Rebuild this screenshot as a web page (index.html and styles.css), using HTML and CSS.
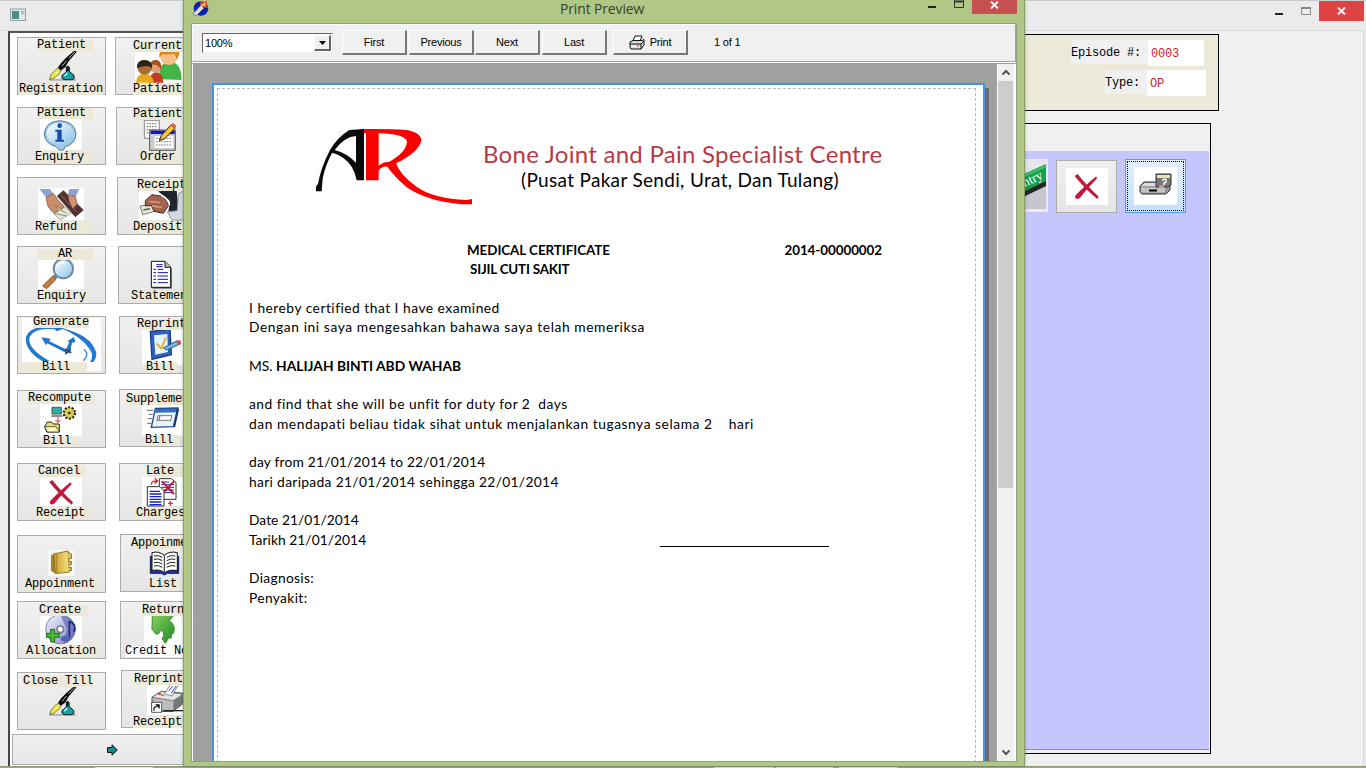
FILE: index.html
```html
<!DOCTYPE html>
<html lang="en">
<head>
<meta charset="utf-8">
<title>Print Preview</title>
<link rel="stylesheet" href="styles.css">
</head>
<body>
<div class="desktop">
  <svg class="defs" width="0" height="0">
    <defs>
      <linearGradient id="lens" x1="0" y1="0" x2="1" y2="1"><stop offset="0" stop-color="#fff"/><stop offset="1" stop-color="#8cc4e8"/></linearGradient>
      <linearGradient id="leaf" x1="0" y1="0" x2="1" y2="1"><stop offset="0" stop-color="#8ad060"/><stop offset="1" stop-color="#1d8a22"/></linearGradient>
      <linearGradient id="disc" x1="0" y1="0" x2="1" y2="1"><stop offset="0" stop-color="#f4f4ff"/><stop offset="1" stop-color="#7f86c8"/></linearGradient>
      <linearGradient id="gold" x1="0" y1="0" x2="1" y2="0"><stop offset="0" stop-color="#c99a20"/><stop offset="1" stop-color="#f8e588"/></linearGradient>
      <symbol id="pen" viewBox="0 0 84 92">
        <path d="M2 90H82" stroke="#777" stroke-width="3"/>
        <path d="M84 0H79L54 22L38 38L28 52L36 62L50 52L60 34L84 6Z" fill="#0c0c0c"/>
        <path d="M79 6L60 25M54 32L40 48" stroke="#ddd" stroke-width="2.500"/>
        <path d="M27 54L14 66L7 74L2 89L16 84L32 71L37 62Z" fill="#f2e835" stroke="#444" stroke-width="2"/>
        <path d="M20 66L28 70" stroke="#fff" stroke-width="3"/>
        <path d="M53 60V52Q58 46 62 52V64L76 76V86L70 89H46L40 84V76L53 66Z" fill="#16a0a8" stroke="#111" stroke-width="3"/>
        <path d="M47 78L56 69" stroke="#9ff" stroke-width="5"/>
        <path d="M57 48V64" stroke="#111" stroke-width="6"/>
      </symbol>
      <symbol id="cross" viewBox="0 0 80 80">
        <path d="M6 8L14 3Q36 32 76 70L72 77Q36 48 4 8Z" fill="#b8203a"/>
        <path d="M68 10L72 15Q44 44 18 76L8 76L6 68Q30 42 68 10Z" fill="#c8143c"/>
      </symbol>
    </defs>
  </svg>

  <section class="main-window">
    <header class="main-title">
      <svg class="app-icon" width="16" height="14" viewBox="0 0 16 14"><rect x=".5" y="1" width="15" height="11.5" fill="#dfe8e8" stroke="#999ea0"/><rect x="2" y="3" width="7" height="8" fill="#4d8c86"/><rect x="11" y="3" width="3" height="3" fill="#a9bfc0"/></svg>
      <div class="controls">
        <svg width="54" height="22" viewBox="0 0 54 22"><path d="M10 13H18" stroke="#222" stroke-width="2"/><path d="M36.500 6.500H45.500V13.500H36.500Z" fill="none" stroke="#8a8a8a"/><path d="M36 7H46" stroke="#8a8a8a" stroke-width="2"/></svg>
        <div class="close"><svg width="9" height="8" viewBox="0 0 9 8"><path d="M1 .5L8 7.500M8 .5L1 7.500" stroke="#fff" stroke-width="1.800"/></svg></div>
      </div>
    </header>
    <div class="main-body">
      <nav class="sidebar">
        <div class="row r1">
          <div class="tile reg"><svg viewBox="51 111 267 174"><use href="#pen" x="146" y="150" width="84" height="92"/></svg><span class="cap a">Patient</span><span class="cap b">Registration</span></div>
          <div class="tile cur"><svg viewBox="345 111 267 174"><rect x="405" y="150" width="150" height="99" fill="#fff"/><path d="M480 238Q470 190 510 186Q546 188 544 240Z" fill="#45b548"/><circle cx="507" cy="168" r="27" fill="#f4c089"/><path d="M478 166Q478 148 500 150L538 148Q540 170 528 178Q532 156 500 164Q488 158 478 174Z" fill="#d98a1c"/><path d="M448 248Q448 218 470 216Q490 220 490 248Z" fill="#c33d22"/><circle cx="467" cy="200" r="18" fill="#dba070"/><path d="M450 196Q452 178 470 180Q486 184 484 210Q470 188 450 196Z" fill="#a9501c"/><path d="M408 248Q410 222 434 220Q458 224 462 248Z" fill="#e6ab18"/><circle cx="434" cy="202" r="22" fill="#a96a35"/><path d="M411 204Q410 180 434 180Q458 182 456 204Q446 192 411 204Z" fill="#282218"/></svg><span class="cap a">Current</span><span class="cap b">Patient</span></div>
        </div>
        <div class="row r2">
          <div class="tile enq"><svg viewBox="51 321 267 174"><rect x="120" y="350" width="125" height="99" fill="#fff"/><path d="M168 440Q134 430 133 402Q136 364 180 362Q226 366 228 402Q226 432 196 440L190 450H178Z" fill="#9fcbe8" stroke="#59779b" stroke-width="3"/><ellipse cx="180" cy="400" rx="40" ry="32" fill="url(#lens)"/><circle cx="179" cy="377" r="7" fill="#174aa8"/><path d="M166 389H185V419H192V425H166V419H172V395H166Z" fill="#174aa8"/></svg><span class="cap a">Patient</span><span class="cap b">Enquiry</span></div>
          <div class="tile ord"><svg viewBox="348 321 267 174"><path d="M433 361H478V415H433Z" fill="#f8f8f8" stroke="#888" stroke-width="3"/><path d="M440 371H470M440 380H470M440 389H470M440 398H470" stroke="#777" stroke-width="3" stroke-dasharray="5 3"/><path d="M449 390H526V451H449Z" fill="#ccc" stroke="#555" stroke-width="3"/><path d="M452 397H524" stroke="#1010d8" stroke-width="10"/><path d="M464 408H520V444H464Z" fill="#fff"/><path d="M468 415H516M468 425H516M468 435H516" stroke="#777" stroke-width="3" stroke-dasharray="5 3"/><path d="M478 422L484 406L514 374L526 384L494 416Z" fill="#f4c52b" stroke="#222" stroke-width="3"/><path d="M512 376L519 369L529 378L523 386Z" fill="#e05848"/></svg><span class="cap a">Patient</span><span class="cap b">Order</span></div>
        </div>
        <div class="row r3">
          <div class="tile ref"><svg viewBox="51 531 267 174"><rect x="114" y="565" width="138" height="95" fill="#fff"/><path d="M118 567H150L160 582L140 594Z" fill="#8ca4d0"/><path d="M238 567H208L204 582L226 592Z" fill="#8ca4d0"/><path d="M150 630L184 610L214 640L180 660Z" fill="#e2e6d8" stroke="#909880" stroke-width="2"/><path d="M162 640L200 648M174 626L200 640" stroke="#8b9578" stroke-width="3"/><path d="M138 592L160 580L176 602L192 622L184 628L166 616L176 634L164 638L144 620Z" fill="#c98d6c" stroke="#7c4b38" stroke-width="2"/><path d="M172 588L190 572L250 630L226 650Z" fill="#553230" stroke="#2e1a1a" stroke-width="2"/><path d="M184 586L230 636" stroke="#87605a" stroke-width="3"/><path d="M204 584L226 590L232 612L218 626L208 606Z" fill="#d19373" stroke="#7c4b38" stroke-width="2"/></svg><span class="cap b">Refund</span></div>
          <div class="tile dep"><svg viewBox="351 531 267 174"><rect x="417" y="565" width="150" height="95" fill="#fff"/><path d="M474 574L530 570L536 634L504 642L510 604Z" fill="#22242c"/><path d="M536 580L556 570V660H516L502 636L532 632Z" fill="#d5dae2" stroke="#909aa6" stroke-width="3"/><path d="M420 618L462 612L470 632L428 644Z" fill="#e4eadb" stroke="#6d7e62" stroke-width="3"/><path d="M430 630L450 626" stroke="#596b50" stroke-width="5"/><path d="M436 602L456 584L492 590L506 616L490 640L462 634L454 616L436 618Z" fill="#a5624f" stroke="#4b2722" stroke-width="3"/><path d="M448 604L480 608M456 618L486 622" stroke="#e1a18a" stroke-width="4"/><path d="M484 586Q510 600 508 616" stroke="#fff" stroke-width="5" fill="none"/></svg><span class="cap a">Receipt</span><span class="cap b">Deposit</span></div>
        </div>
        <div class="row r4">
          <div class="tile are"><svg viewBox="51 30 267 174"><rect x="114" y="65" width="138" height="95" fill="#fff"/><path d="M158 120L168 130L140 158L128 150Z" fill="#c87a3a" stroke="#8a532c" stroke-width="3"/><path d="M160 118L170 128" stroke="#777" stroke-width="9"/><circle cx="190" cy="98" r="29" fill="url(#lens)" stroke="#718aa2" stroke-width="6"/><path d="M172 92Q178 78 194 80" stroke="#fff" stroke-width="6" fill="none"/></svg><span class="cap a">AR</span><span class="cap b">Enquiry</span></div>
          <div class="tile sta"><svg viewBox="354 30 267 174"><path d="M457 80H498L516 98V158H457Z" fill="#777"/><path d="M454 76H495L512 93V154H454Z" fill="#fff" stroke="#111" stroke-width="3"/><path d="M495 76V94H512" fill="#bbb" stroke="#111" stroke-width="3"/><path d="M469 86H488M469 92H488M460 100H468M473 100H490M460 110H468M473 110H504M460 120H468M473 120H504M460 130H468M473 130H504M460 140H468M473 140H504" stroke="#1414a8" stroke-width="3"/></svg><span class="cap b">Statement</span></div>
        </div>
        <div class="row r5">
          <div class="tile gen"><svg viewBox="51 240 267 174"><rect x="66" y="246" width="237" height="160" fill="#fff"/><path d="M164 280Q100 274 88 306Q84 340 150 376H128Q72 342 78 302Q92 266 164 272L158 266L196 276L170 286Z" fill="#2279d0"/><path d="M182 276Q274 296 289 350Q290 366 280 378H270Q284 358 268 338Q242 300 182 276Z" fill="#2279d0"/><path d="M252 340Q270 356 250 374" stroke="#2f86da" stroke-width="4" fill="none"/><path d="M124 304L152 308L148 316L198 340L208 318L202 316L222 303L226 318L216 320L210 348L200 352L142 322L138 328Z" fill="#2278c8"/><path d="M194 340L214 350M212 340L196 354" stroke="#204878" stroke-width="5"/><path d="M190 405H220" stroke="#2a7fd4" stroke-width="5"/></svg><span class="cap a">Generate</span><span class="cap b">Bill</span></div>
          <div class="tile rep"><svg viewBox="357 240 267 174"><rect x="426" y="276" width="130" height="110" fill="#fff"/><path d="M451 286L510 280L514 356L456 370Z" fill="#2e63b8" stroke="#1b3d82" stroke-width="4"/><path d="M462 298L502 294L504 348L466 356Z" fill="#e5f1ff"/><path d="M470 322L484 338L498 304" stroke="#eda91d" stroke-width="5" fill="none"/><path d="M490 336L532 314L540 324L500 342Z" fill="#75b9dd" stroke="#28598b" stroke-width="3"/><path d="M528 316L540 312L544 324L534 326Z" fill="#d84650"/></svg><span class="cap a">Reprint</span><span class="cap b">Bill</span></div>
        </div>
        <div class="row r6">
          <div class="tile rec"><svg viewBox="51 462 267 174"><rect x="120" y="501" width="126" height="100" fill="#fff"/><path d="M156 514H184V534H156Z" fill="#2fae9c" stroke="#555" stroke-width="3"/><path d="M154 540H188" stroke="#777" stroke-width="5"/><circle cx="208" cy="531" r="16" fill="#c5b838" stroke="#26240b" stroke-width="8" stroke-dasharray="6 4"/><circle cx="208" cy="531" r="14" fill="#d9cb4c"/><circle cx="208" cy="531" r="4" fill="#222"/><path d="M174 542V558M167 552L174 560L181 552" stroke="#d03030" stroke-width="3" fill="none"/><path d="M134 572L142 558H154L160 564H178V588H140Z" fill="#e7de73" stroke="#222" stroke-width="3"/><path d="M134 572H168L178 588H142Z" fill="#fbf7b2" stroke="#222" stroke-width="2"/></svg><span class="cap a">Recompute</span><span class="cap b">Bill</span></div>
          <div class="tile sup"><svg viewBox="357 459 267 174"><rect x="426" y="500" width="130" height="100" fill="#fff"/><path d="M466 517L534 516L522 572L454 574Z" fill="#e9f3fc" stroke="#1b4d91" stroke-width="4"/><path d="M466 519L534 518L532 529L463 530Z" fill="#2b73c0"/><path d="M534 518L522 572" stroke="#163b74" stroke-width="7"/><path d="M474 539H516L512 553H470Z" fill="#fff" stroke="#777" stroke-width="3"/><path d="M480 540L476 553" stroke="#555" stroke-width="3"/><path d="M440 523H460M446 535H458M443 548H456M442 562H454" stroke="#666" stroke-width="3"/></svg><span class="cap a">Supplementary</span><span class="cap b">Bill</span></div>
        </div>
        <div class="row r7">
          <div class="tile can"><svg viewBox="51 39 267 174"><rect x="120" y="78" width="126" height="90" fill="#fff"/><use href="#cross" x="143" y="87" width="80" height="80"/></svg><span class="cap a">Cancel</span><span class="cap b">Receipt</span></div>
          <div class="tile lat"><svg viewBox="357 39 267 174"><rect x="426" y="80" width="130" height="88" fill="#fff"/><path d="M478 86H514L528 98V148H478Z" fill="#fff" stroke="#333" stroke-width="3"/><path d="M484 96H508M484 104H522M484 112H522M484 120H522M484 128H522" stroke="#282898" stroke-width="3"/><path d="M486 94L522 132M522 94L484 134" stroke="#c2183c" stroke-width="6"/><path d="M442 110H480L492 122V168H442Z" fill="#fff" stroke="#333" stroke-width="3"/><path d="M449 124H480M449 132H484M449 140H484M449 148H484M449 156H484M449 164H484" stroke="#1420b0" stroke-width="4"/><path d="M454 104Q454 92 470 93M464 85L473 93L464 101M504 160H519M511 153V167" stroke="#c83038" stroke-width="4" fill="none"/></svg><span class="cap a">Late</span><span class="cap b">Charges</span></div>
        </div>
        <div class="row r8">
          <div class="tile app"><svg viewBox="51 255 267 174"><rect x="144" y="300" width="81" height="78" fill="#f7f7f4"/><path d="M153 316L168 308V372L153 362Z" fill="#a5842a"/><path d="M160 312L204 303L208 366L166 371Z" fill="url(#gold)" stroke="#9b7824" stroke-width="3"/><path d="M163 316V366M170 312V368" stroke="#8d701f" stroke-width="2"/><path d="M204 306L214 312V326H206M206 334H214V344H208M208 352H214V362H208" fill="#e7cd62" stroke="#7a673a" stroke-width="3"/></svg><span class="cap b">Appoinment</span></div>
          <div class="tile lis"><svg viewBox="360 252 267 174"><path d="M451 318V370H484L493 375L502 370H536V318" fill="#1b34b8" stroke="#101c60" stroke-width="3"/><path d="M493 316Q476 302 456 308V362Q478 356 493 368Q510 356 532 362V308Q510 302 493 316Z" fill="#fff" stroke="#111" stroke-width="3"/><path d="M493 316V366M462 318Q476 314 487 322M462 328Q476 324 487 332M462 338Q476 334 487 342M462 348Q476 344 487 352M500 322Q512 314 526 318M500 332Q512 324 526 328M500 342Q512 334 526 338M500 352Q512 344 526 348" stroke="#222" stroke-width="3" fill="none"/></svg><span class="cap a">Appoinment</span><span class="cap b">List</span></div>
        </div>
        <div class="row r9">
          <div class="tile cre"><svg viewBox="51 453 267 174"><rect x="120" y="492" width="126" height="92" fill="#fff"/><circle cx="181" cy="538" r="44" fill="url(#disc)" stroke="#8084a8" stroke-width="3"/><path d="M181 494Q222 500 229 538Q222 576 190 582L200 538Z" fill="#6268b4" opacity=".7"/><circle cx="181" cy="538" r="10" fill="#fff" stroke="#777" stroke-width="5"/><path d="M208 512V562M208 514Q230 522 222 546" stroke="#202878" stroke-width="5" fill="none"/><ellipse cx="196" cy="566" rx="14" ry="9" fill="#5261c0"/><path d="M152 538H164V550H178V562H164V576H152V562H139V550H152Z" fill="#44b932" stroke="#1d6f1c" stroke-width="3"/></svg><span class="cap a">Create</span><span class="cap b">Allocation</span></div>
          <div class="tile ret"><svg viewBox="360 453 267 174"><rect x="432" y="492" width="130" height="95" fill="#fff"/><path d="M457 496H521L508 512Q528 526 521 548L514 556V564H506L496 580L486 566Q498 552 484 540L474 552H468L456 538Z" fill="url(#leaf)" stroke="#3a8a34" stroke-width="3"/></svg><span class="cap a">Return</span><span class="cap b">Credit Note</span></div>
        </div>
        <div class="row r10">
          <div class="tile clo"><svg viewBox="51 666 267 174"><use href="#pen" x="146" y="707" width="84" height="90"/></svg><span class="cap a">Close Till</span></div>
          <div class="tile rpr"><svg viewBox="363 660 267 174"><rect x="441" y="702" width="120" height="93" fill="#fff"/><path d="M456 742L484 724L550 730V760L520 784H456Z" fill="#bdbdbd" stroke="#444" stroke-width="3"/><path d="M484 724L550 732L520 752L456 742Z" fill="#e4e4e4" stroke="#555" stroke-width="2"/><path d="M520 752L550 734V760L520 784Z" fill="#777"/><path d="M494 732L512 702H536L516 738Z" fill="#fff" stroke="#556" stroke-width="2"/><path d="M506 724L518 708M514 730L528 708" stroke="#3a4ac0" stroke-width="3"/><path d="M474 732H484" stroke="#d33" stroke-width="5"/><path d="M484 736H492" stroke="#2a2" stroke-width="4"/><path d="M490 782H550" stroke="#222" stroke-width="4"/><path d="M455 757H485V787H455Z" fill="#fff" stroke="#111" stroke-width="2"/><path d="M462 782Q460 770 470 770" stroke="#111" stroke-width="4" fill="none"/><path d="M465 763H479V777Z" fill="#111"/></svg><span class="cap a">Reprint</span><span class="cap b">Receipt</span></div>
        </div>
        <div class="next"><svg width="11" height="12" viewBox="0 0 11 12"><path d="M.5 3.500H5V.8L10.300 6L5 11.200V8.500H.5Z" fill="#158a88" stroke="#111"/></svg></div>
      </nav>
      <div class="work">
        <div class="episode">
          <div class="field f1"><label>Episode #:</label><output>0003</output></div>
          <div class="field f2"><label>Type:</label><output>OP</output></div>
        </div>
        <div class="panel">
          <div class="panel-area">
            <svg class="entry" width="60" height="53" viewBox="-37 0 60 53"><rect x="-37" width="60" height="53" fill="#e9e9ef"/><rect x="-37" y="1" width="58" height="49" fill="#c6c5cf"/><path d="M-37 1H21V22L-37 48Z" fill="#e6e6ea"/><path d="M-10 19L21 5V23L-10 38Z" fill="#16a04c"/><path d="M-10 21L21 7" stroke="#45be70" stroke-width="2"/><path d="M-10 37L21 22V27L-10 42Z" fill="#252525"/><text x="-6" y="28" transform="rotate(-26 0 28)" class="entry-text">entry</text></svg>
            <div class="tool"><div class="pic"><svg width="27" height="27"><use href="#cross" width="27" height="27"/></svg></div></div>
            <div class="tool focused"><div class="pic wide"><svg width="33" height="23" viewBox="0 0 33 23"><path d="M1 13L5 9H28L31 12V17L27 21H3L1 19Z" fill="#999" stroke="#333"/><path d="M2 13H25L29 10H6Z" fill="#ddd"/><path d="M2 14.500H26V19.500H2Z" fill="#c4c4c4"/><path d="M10 17.500H18" stroke="#000" stroke-width="2"/><path d="M17 1H32V12L29 14H17Z" fill="#777" stroke="#333"/><path d="M18 2H31V5H18Z" fill="#e9e5a9"/><path d="M23 7.500Q28 4 27 9L25 10V12" stroke="#fff" stroke-width="1.500" fill="none"/><path d="M20 14H25" stroke="#c9a0a0" stroke-width="3"/></svg></div></div>
          </div>
        </div>
      </div>
    </div>
  </section>

  <div class="taskbar"><i class="t0"></i><i class="t1"></i><i class="t2"></i><i class="t3"></i></div>

  <section class="preview">
    <header class="preview-title">
      <svg class="pv-icon" width="18" height="17" viewBox="0 0 18 17"><circle cx="9" cy="8.500" r="7.300" fill="#0b22b0"/><path d="M1 14L9 5L12 8L4 16Z" fill="#ddd" stroke="#667" stroke-width=".8"/><path d="M8 5L9 1L12 3L15 0L15 5L16 8L12 7Z" fill="#e8502a"/><path d="M9 6L13 2L13 6Z" fill="#ffd95a"/></svg>
      <h1>Print Preview</h1>
      <div class="pv-controls">
        <svg width="45" height="14" viewBox="0 0 45 14"><path d="M1 7H9" stroke="#222" stroke-width="2"/><path d="M27.500 0V7.500H36.500V0" fill="none" stroke="#333"/><path d="M27 1.500H37" stroke="#333" stroke-width="2"/></svg>
        <div class="pv-close"><svg width="9" height="8" viewBox="0 0 9 8"><path d="M1 .5L8 7.500M8 .5L1 7.500" stroke="#fff" stroke-width="1.800"/></svg></div>
      </div>
    </header>
    <div class="client">
      <div class="toolbar">
        <div class="combo"><span>100%</span><b><svg width="7" height="4" viewBox="0 0 7 4"><path d="M0 0H7L3.500 4Z"/></svg></b></div>
        <div class="btn">First</div><div class="btn">Previous</div><div class="btn n3">Next</div><div class="btn">Last</div>
        <div class="btn print"><svg width="16" height="15" viewBox="0 0 16 15"><path d="M4 6L6 1H13L11 6" fill="#fff" stroke="#111"/><path d="M1 7L4 5.500H13L15 4.500V10L12 14H2L1 12Z" fill="#ddd" stroke="#111"/><path d="M1 9H12L15 6M12 9V14" fill="none" stroke="#111"/><path d="M2 11.500H11" stroke="#fff"/><path d="M8 11H10" stroke="#d22"/></svg>Print</div>
        <span class="pages">1 of 1</span>
      </div>
      <div class="viewer">
        <div class="canvas">
          <article class="page">
            <div class="sheet">
              <div class="letterhead">
                <svg class="logo" width="160" height="82" viewBox="45 35 480 246"><path d="M48 228Q46 212 54 206Q62 158 90 104Q112 66 148 44L192 41V195H170Q162 150 130 128Q110 114 96 113Q76 150 68 190L65 228ZM104 104Q142 114 168 142V62Q134 64 104 104Z" fill="#0b0b0b"/><path d="M192 41Q270 40 320 44Q364 52 364 76Q356 110 288 144Q302 182 350 214Q400 250 500 254L516 251V267H484Q382 258 320 216Q278 178 262 154Q246 152 236 166V195H198V54H192ZM236 54V152Q250 138 266 140Q318 112 321 80Q318 56 236 54Z" fill="#fb0000"/></svg>
                <div class="names"><h2>Bone Joint and Pain Specialist Centre</h2><h3>(Pusat Pakar Sendi, Urat, Dan Tulang)</h3></div>
              </div>
              <div class="heading"><div class="kind"><p>MEDICAL CERTIFICATE</p><p class="k2">SIJIL CUTI SAKIT</p></div><p class="number">2014-00000002</p></div>
              <div class="letter">
                <p class="l1">I hereby certified that I have examined</p>
                <p class="l2">Dengan ini saya mengesahkan bahawa saya telah memeriksa</p>
                <p class="gap l3"><span>MS.</span> <strong>HALIJAH BINTI ABD WAHAB</strong></p>
                <p class="gap l4">and find that she will be unfit for duty for 2&nbsp; days</p>
                <p class="l5">dan mendapati beliau tidak sihat untuk menjalankan tugasnya selama 2&nbsp; &nbsp; hari</p>
                <p class="gap l6">day from 21/01/2014 to 22/01/2014</p>
                <p class="l7">hari daripada 21/01/2014 sehingga 22/01/2014</p>
                <p class="gap l8">Date 21/01/2014</p>
                <div class="signed"><p class="l9">Tarikh 21/01/2014</p><i></i></div>
                <p class="gap l10">Diagnosis:</p>
                <p class="l11">Penyakit:</p>
              </div>
            </div>
          </article>
        </div>
        <div class="scrollbar">
          <svg width="16" height="17" viewBox="0 0 16 17"><path d="M4.500 10.500L8 7L11.500 10.500" fill="none" stroke="#555" stroke-width="2"/></svg>
          <div class="thumb"></div>
          <svg class="down" width="16" height="17" viewBox="0 0 16 17"><path d="M4.500 6.500L8 10L11.500 6.500" fill="none" stroke="#555" stroke-width="2"/></svg>
        </div>
      </div>
    </div>
  </section>
</div>
</body>
</html>
```
FILE: styles.css
```css
* { box-sizing: border-box; }
body, p, h1, h2, h3 { margin: 0; font-weight: normal; }
body { background: #f0f0f0; overflow: hidden; }
svg { display: block; flex: none; }
.defs { position: absolute; }
.desktop { position: relative; width: 1366px; height: 768px; overflow: hidden; }

/* main window */
.main-window { display: flex; flex-direction: column; height: 768px; background: #ebebeb; border-top: 1px solid #cbcbcb; }
.main-title { display: flex; justify-content: space-between; height: 29px; padding: 0 2px 0 10px; }
.app-icon { margin-top: 7px; }
.controls { display: flex; }
.close { display: flex; justify-content: center; align-items: center; width: 45px; height: 20px; background: #e04343; }
.main-body { display: flex; flex: 1; justify-content: space-between; padding-left: 8px; background: linear-gradient(90deg, #ebebeb 8px, #f0f0f0 8px); border-top: 1px solid #d8dcdc; border-right: 1px solid #d8dcdc; margin-right: 2px; }

/* sidebar */
.sidebar { width: 230px; background: #fff; border-left: 2px solid #444; border-top: 2px solid #555; padding: 4px 0 0 7px; font: 12px/11px "Liberation Mono", monospace; letter-spacing: -.2px; color: #000; }
.row { display: flex; height: 58px; align-items: flex-start; margin-bottom: 12px; }
.r3 { margin-bottom: 11px; }
.r5 { margin-bottom: 16px; }
.r6 { margin-bottom: 15px; }
.r7 { margin-bottom: 14px; }
.r8 { margin-bottom: 8px; }
.r9 { margin-bottom: 13px; }
.r10 { margin-bottom: 4px; }
.r1 { gap: 9px; } .r2 { gap: 10px; } .r3 { gap: 11px; } .r4 { gap: 12px; } .r5, .r6, .r7 { gap: 13px; } .r8, .r9 { gap: 14px; } .r10 { gap: 15px; }
.tile { display: grid; flex: none; width: 89px; height: 58px; padding-top: 1px; background: linear-gradient(#f1f1f1, #e5e5e5); box-shadow: inset 0 0 0 1px #acacac; }
.tile > * { grid-area: 1 / 1; justify-self: start; align-self: start; }
.tile > svg { width: 89px; height: 58px; margin-top: -1px; }
.cap { height: 11px; padding-right: 7px; background: #ece9d8; white-space: pre; }
.sup, .lis { margin-top: -1px; }
.rpr { margin-top: -2px; }
.reg .a { margin: 2px 0 0 20px; } .reg .b { margin: 46px 0 0 2px; padding-right: 0; }
.cur .a { margin: 3px 0 0 18px; } .cur .b { margin: 46px 0 0 18px; }
.enq .a { margin: 0 0 0 20px; } .enq .b { margin: 44px 0 0 18px; }
.ord .a { margin: 1px 0 0 17px; } .ord .b { margin: 44px 0 0 24px; }
.ref .b { margin: 44px 0 0 18px; padding-right: 14px; }
.dep .a { margin: 2px 0 0 20px; } .dep .b { margin: 44px 0 0 16px; }
.are .a { margin: 2px 0 0 20px; padding: 0 21px; } .are .b { margin: 44px 0 0 20px; padding-right: 4px; }
.sta .b { margin: 44px 0 0 13px; }
.gen .a { margin: 0 0 0 16px; padding-right: 0; } .gen .b { margin: 45px 0 0 5px; padding: 0 17px 0 20px; }
.rep .a { margin: 2px 0 0 18px; } .rep .b { margin: 45px 0 0 27px; padding-right: 3px; }
.rec .a { margin: 2px 0 0 11px; padding-right: 4px; } .rec .b { margin: 45px 0 0 26px; }
.sup .a { margin: 4px 0 0 7px; } .sup .b { margin: 45px 0 0 26px; }
.can .a { margin: 2px 0 0 21px; padding-right: 5px; } .can .b { margin: 44px 0 0 19px; }
.lat .a { margin: 2px 0 0 27px; padding-right: 14px; } .lat .b { margin: 44px 0 0 17px; }
.app .b { margin: 43px 0 0 8px; padding-right: 3px; }
.lis .a { margin: 3px 0 0 11px; } .lis .b { margin: 44px 0 0 29px; padding-right: 5px; }
.cre .a { margin: 3px 0 0 22px; } .cre .b { margin: 44px 0 0 9px; padding-right: 2px; }
.ret .a { margin: 3px 0 0 22px; } .ret .b { margin: 44px 0 0 5px; background: #fff; }
.clo .a { margin: 3px 0 0 6px; padding-right: 0; }
.rpr .a { margin: 3px 0 0 13px; } .rpr .b { margin: 46px 0 0 12px; }
.next { display: flex; align-items: center; height: 31px; width: 200px; margin-left: -5px; padding-left: 94px; background: linear-gradient(#f1f1f1, #e7e7e7); border: 1px solid #acacac; }

/* work area */
.work { display: flex; flex-direction: column; align-items: flex-start; width: 463px; padding-top: 3px; font: 12px/12px "Liberation Mono", monospace; letter-spacing: -.2px; }
.episode { display: flex; flex-direction: column; gap: 4px; align-items: flex-end; width: 319px; height: 77px; padding: 5px 14px 0 0; background: #ece9d8; border: 1px solid #000; }
.field { display: flex; align-items: flex-start; }
.field label { height: 24px; padding: 7px 7px 0 0; background: #f0f0f0; }
.field output { width: 56px; height: 26px; padding: 8px 0 0 3px; background: #fff; color: #d0202c; }
.f2 { margin-right: -2px; }
.f2 output { width: 59px; }
.panel { width: 311px; height: 631px; margin-top: 12px; border: 1px solid #000; padding: 27px 1px 3px 0; background: #f0f0f0; }
.panel-area { display: flex; align-items: flex-start; height: 599px; padding: 8px 23px 0 0; background: #c6c6ff; border-bottom: 1px solid #8484d8; justify-content: flex-end; }
.entry { margin: 0 8px 0 0; }
.entry-text { font: 13px "Liberation Serif", serif; fill: #fff; letter-spacing: 0; }
.tool { display: flex; align-items: center; justify-content: center; width: 61px; height: 53px; margin: 1px 8px 0 0; background: linear-gradient(#efefef, #e5e5e5); border: 1px solid #acacac; }
.tool.focused { height: 54px; margin: 0; background: linear-gradient(#e4f0fc, #c4e0fc); border-color: #569de5; outline: 1px dotted #000; outline-offset: -3px; }
.pic { display: flex; align-items: center; justify-content: center; width: 42px; height: 37px; background: #fff; }
.wide { width: 43px; height: 38px; padding-bottom: 4px; }

/* print preview window */
.preview { position: absolute; left: 183px; top: 0; width: 842px; height: 766px; padding: 0 7px 4px 7px; background: #b1c786; border: 1px solid #8a9c68; border-width: 0 1px; box-shadow: 0 0 3px rgba(0,0,0,.3); display: flex; flex-direction: column; }
.preview-title { display: flex; align-items: flex-start; height: 23px; }
.pv-icon { margin: 0 0 0 1px; }
.preview h1 { flex: 1; margin-left: 350px; font: 14px/17px "Open Sans", sans-serif; letter-spacing: -.1px; color: #37432a; white-space: nowrap; }
.preview h1 { letter-spacing: -.1px; font-size: 13.9px; }
.pv-controls { display: flex; margin-right: 0; }
.pv-close { display: flex; align-items: center; justify-content: center; width: 45px; height: 14px; padding-bottom: 5px; background: #c75050; }
.client { display: flex; flex-direction: column; flex: 1; border: 1px solid #969d85; background: #fff; gap: 1px; min-height: 0; }
.toolbar { display: flex; align-items: flex-start; height: 38px; padding: 5px 0 0 9px; background: #f0f0f0; border: 1px solid #999; border-color: #fff #a0a0a0 #a0a0a0 #fff; font: 11px/12px "Liberation Sans", sans-serif; letter-spacing: -.2px; color: #000; }
.combo { display: flex; justify-content: space-between; width: 131px; height: 20px; margin: 3px 9px 0 0; padding: 1px; background: #fff; border: 1px solid #777; border-color: #666 #eee #eee #666; }
.combo span { padding: 2px 0 0 1px; }
.combo b { display: flex; align-items: center; justify-content: center; width: 17px; background: #f0f0f0; border: 1px solid #666; border-color: #fff #666 #666 #fff; border-width: 1px 2px 2px 1px; }
.btn { display: flex; align-items: center; justify-content: center; width: 65px; height: 25px; margin-right: 2px; padding-bottom: 1px; border: 1px solid #fff; border-right: 2px solid #777; border-bottom: 2px solid #777; }
.btn:nth-child(3) { margin-right: 1px; }
.print { width: 75px; margin-left: 4px; gap: 5px; padding-bottom: 0; }
.pages { padding: 6px 0 0 24px; }
.viewer { display: flex; flex: 1; min-height: 0; border: solid #a0a0a0; border-width: 1px 0 0 0; padding: 0 2px 1px 1px; }
.canvas { flex: 1; height: 697px; padding: 19px 0 0 19px; background: #a0a0a0; overflow: hidden; }
.page { width: 773px; height: 760px; padding: 3px; background: #fff; border: 2px solid #4a90dc; box-shadow: 4px 5px 0 #6a6a6a; }
.sheet { width: 759px; height: 740px; border: 1px dashed #b8b8b8; font: 13.8px/19.35px Lato, sans-serif; color: #000; }
.scrollbar { width: 17px; height: 697px; display: flex; flex-direction: column; background: #f0f0f0; border-left: 1px solid #fff; }
.thumb { width: 15px; height: 407px; background: #cdcdcd; }
.down { margin-top: auto; }

/* certificate */
.letterhead { display: flex; height: 150px; padding: 38px 0 0 97px; }
.names { margin-left: 8px; white-space: nowrap; }
.names h2 { font-size: 24px; line-height: 28px; padding-top: 13px; color: #b53a44; letter-spacing: .27px; }
.names h3 { padding-left: 38px; font-size: 19px; line-height: 24px; letter-spacing: .32px; }
.heading { display: flex; justify-content: space-between; height: 58px; padding: 2px 93px 0 249px; font-size: 13.4px; }
.heading p { font-weight: bold; letter-spacing: -.05px; }
.heading .k2 { padding-left: 3px; letter-spacing: -.2px; }
.letter { padding: .5px 0 0 31px; white-space: nowrap; }
.l1 { letter-spacing: .49px; }
.l2 { letter-spacing: .58px; }
.l4 { letter-spacing: .47px; }
.l5 { letter-spacing: .54px; }
.l6 { letter-spacing: .2px; }
.l7 { letter-spacing: .33px; }
.l8, .l9 { letter-spacing: .04px; }
.l10 { letter-spacing: .3px; }
.l11 { letter-spacing: .35px; }
.gap { margin-top: 19.35px; }
.signed { display: flex; justify-content: space-between; }
.signed i { width: 169px; height: 1px; margin: 16px 146px 0 0; background: #000; }

.taskbar { position: absolute; left: 0; top: 766px; width: 1366px; height: 2px; background: #909a78; border-bottom: 1px solid #9db072; }
.taskbar i { position: absolute; top: 1px; height: 1px; background: #dfe6cc; }
.t0 { left: 95px; width: 58px; } .t1 { left: 714px; width: 60px; } .t2 { left: 776px; width: 57px; } .t3 { left: 839px; width: 58px; }
```
